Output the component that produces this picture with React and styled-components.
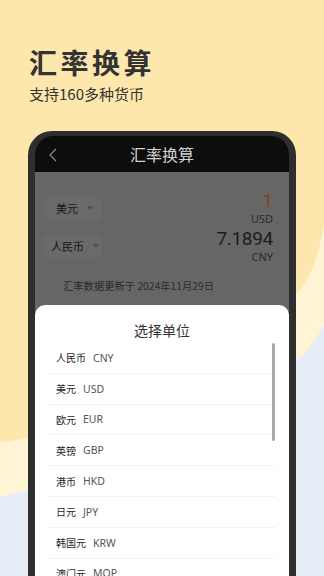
import React from "react"
import styled, { createGlobalStyle } from "styled-components"

const GlobalStyle = createGlobalStyle`
  html, body {
    margin: 0;
    padding: 0;
  }
  body {
    font-family: "Noto Sans CJK SC", "Noto Sans", sans-serif;
    background: #fee7ac;
  }
`

const Page = styled.div`
  position: relative;
  width: 324px;
  height: 576px;
  overflow: hidden;
  background: #fee7ac;
`

const Backdrop = styled.svg`
  position: absolute;
  inset: 0;
  z-index: 0;
`

const Content = styled.div`
  position: relative;
  z-index: 1;
  display: flex;
  flex-direction: column;
`

const Hero = styled.div`
  padding: 47px 0 0 29px;
  color: #333;
`

const Title = styled.h1`
  margin: 0;
  font-size: 28px;
  line-height: 30px;
  font-weight: 700;
  letter-spacing: 3.5px;
`

const Subtitle = styled.p`
  margin: 7px 0 0;
  font-size: 15px;
  line-height: 20px;
`

const Phone = styled.div`
  margin: 27px 0 0 28px;
  width: 254px;
  height: 460px;
  border: 7px solid #2e2e2e;
  border-top-width: 5px;
  border-bottom: none;
  border-radius: 24px 24px 0 0;
  background: #2e2e2e;
  overflow: hidden;
  display: flex;
  flex-direction: column;
`

const Header = styled.div`
  position: relative;
  height: 36px;
  flex-shrink: 0;
  background: #0d0d0d;
  border-radius: 18px 18px 0 0;
  display: flex;
  align-items: center;
  justify-content: center;
  color: #d2d2d2;
  font-size: 16px;
`

const Back = styled.svg`
  position: absolute;
  left: 14px;
  top: 12px;
`

const Screen = styled.div`
  position: relative;
  flex: 1;
  background: #666;
  padding: 18px 16px 0 8px;
`

const Row = styled.div`
  display: flex;
  justify-content: space-between;
  align-items: center;
  margin-bottom: 2px;
`

const Pill = styled.div`
  width: 59px;
  height: 25px;
  box-sizing: border-box;
  padding-left: ${p => p.$pad}px;
  border-radius: 8px;
  background: #6a6a6a;
  display: flex;
  align-items: center;
  gap: 9px;
  font-size: 11px;
  color: #141414;
`

const Caret = styled.span`
  width: 0;
  height: 0;
  border-left: 3.5px solid transparent;
  border-right: 3.5px solid transparent;
  border-top: 4px solid #505050;
`

const Amount = styled.div`
  display: flex;
  flex-direction: column;
  align-items: flex-end;
`

const Value = styled.span`
  font-family: Roboto, "Noto Sans", sans-serif;
  font-size: ${p => p.$size}px;
  line-height: 22px;
  color: ${p => p.$color};
  letter-spacing: -0.3px;
`

const Code = styled.span`
  font-family: "Noto Sans", sans-serif;
  font-size: 11px;
  line-height: 14px;
  color: #2a2a2a;
`

const Updated = styled.div`
  margin: 15px 0 0 20px;
  font-size: 10.3px;
  line-height: 14px;
  color: #2b2b2b;
`

const Sheet = styled.div`
  position: absolute;
  left: 0;
  right: 0;
  top: 133px;
  bottom: 0;
  background: #fff;
  border-radius: 10px 10px 0 0;
  padding-top: 15px;
`

const SheetTitle = styled.div`
  text-align: center;
  font-size: 14px;
  line-height: 20px;
  color: #333;
`

const List = styled.div`
  position: relative;
  margin: 3px 0 0 13px;
  width: 227px;
`

const Scrollbar = styled.div`
  position: absolute;
  right: 0;
  top: 0;
  width: 3px;
  height: 98px;
  border-radius: 2px;
  background: #a9a9a9;
`

const Item = styled.div`
  height: 30.8px;
  box-sizing: border-box;
  padding-left: 8px;
  display: flex;
  align-items: center;
  gap: 7px;
  border-bottom: 1px solid #f2f2f2;
`

const Name = styled.span`
  font-size: 10px;
  color: #1e1e1e;
`

const ItemCode = styled.span`
  font-family: "Noto Sans", sans-serif;
  font-size: 10.5px;
  color: #555;
`

const currencies = [
  ["人民币", "CNY"],
  ["美元", "USD"],
  ["欧元", "EUR"],
  ["英镑", "GBP"],
  ["港币", "HKD"],
  ["日元", "JPY"],
  ["韩国元", "KRW"],
  ["澳门元", "MOP"],
]

export default function App() {
  return (
    <Page>
      <GlobalStyle />
      <Backdrop width="324" height="576" viewBox="0 0 324 576">
        <rect width="324" height="576" fill="#e7edf7" />
        <path d="M0,0 H324 V325 Q312,348 297,360 C230,410 80,478 0,497 Z" fill="#fff4d4" />
        <path d="M0,0 H324 V226 Q315,275 297,293 C237,353 80,436 0,442 Z" fill="#fee7ac" />
      </Backdrop>
      <Content>
        <Hero>
          <Title>汇率换算</Title>
          <Subtitle>支持160多种货币</Subtitle>
        </Hero>
        <Phone>
          <Header>
            <Back width="8" height="14" viewBox="0 0 8 14">
              <polyline points="7,1 1,7 7,13" fill="none" stroke="#8a8a8a" strokeWidth="1.2" />
            </Back>
            汇率换算
          </Header>
          <Screen>
            <Row>
              <Pill $pad={13}>美元<Caret /></Pill>
              <Amount>
                <Value $size={19} $color="#8c3d1b">1</Value>
                <Code>USD</Code>
              </Amount>
            </Row>
            <Row>
              <Pill $pad={8}>人民币<Caret /></Pill>
              <Amount>
                <Value $size={19} $color="#1c1c1c">7.1894</Value>
                <Code>CNY</Code>
              </Amount>
            </Row>
            <Updated>汇率数据更新于 2024年11月29日</Updated>
            <Sheet>
              <SheetTitle>选择单位</SheetTitle>
              <List>
                <Scrollbar />
                {currencies.map(([name, code]) => (
                  <Item key={code}>
                    <Name>{name}</Name>
                    <ItemCode>{code}</ItemCode>
                  </Item>
                ))}
              </List>
            </Sheet>
          </Screen>
        </Phone>
      </Content>
    </Page>
  )
}
